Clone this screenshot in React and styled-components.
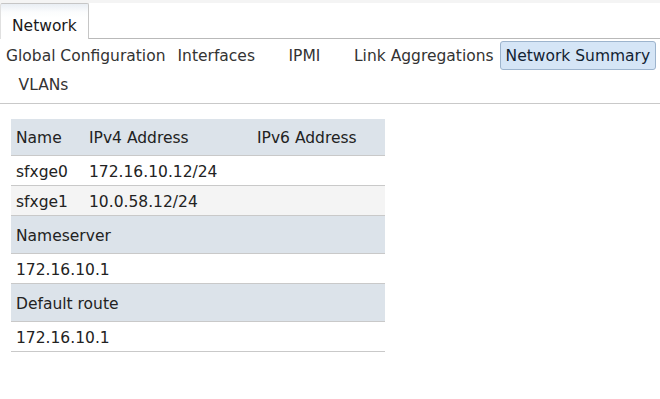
import React from "react";
import styled, { createGlobalStyle } from "styled-components";

const Global = createGlobalStyle`
  html, body { margin: 0; padding: 0; background: #fff; }
  body { font-family: "DejaVu Sans", Verdana, sans-serif; font-size: 15.5px; color: #222; }
`;

const Page = styled.div`
  width: 660px;
  height: 399px;
  background: #fff;
  border-top: 3px solid #f4f4f4;
  box-sizing: border-box;
`;

const TabBar = styled.div`
  display: flex;
  align-items: flex-end;
  height: 36px;
`;

const Tab = styled.div`
  width: 89px;
  height: 36px;
  box-sizing: border-box;
  border: 1px solid #c6c6c6;
  border-bottom: none;
  border-left-color: #e0e0e0;
  border-radius: 2px 2px 0 0;
  background: linear-gradient(#e9eef4 0px, #fbfcfd 8px, #fff 14px);
  padding: 0 0 4px 11px;
  display: flex;
  align-items: flex-end;
  color: #1a1a1a;
`;

const TabFill = styled.div`
  flex: 1;
  align-self: stretch;
  border-bottom: 1px solid #b9b9b9;
`;

const SubNav = styled.div`
  display: flex;
  flex-wrap: wrap;
  padding: 2px 0 4px 0;
  border-bottom: 1px solid #c9c9c9;
`;

const NavItem = styled.div`
  min-width: 87px;
  height: 29px;
  box-sizing: border-box;
  padding: 1px 5px 0;
  display: flex;
  align-items: center;
  justify-content: center;
  white-space: nowrap;
  border: 1px solid ${(p) => (p.$active ? "#9db4cd" : "transparent")};
  border-radius: 3px;
  background: ${(p) => (p.$active ? "#d5e5f6" : "transparent")};
  color: ${(p) => (p.$active ? "#112233" : "#333")};
`;

const Content = styled.div`
  padding: 15px 11px;
`;

const Table = styled.div`
  width: 374px;
  display: grid;
  grid-template-columns: 73px 168px 133px;
`;

const Cell = styled.div`
  height: ${(p) => (p.$section ? 38 : p.$head ? 37 : 30)}px;
  box-sizing: border-box;
  padding: 2px 5px 0;
  display: flex;
  align-items: center;
  background: ${(p) => (p.$head || p.$section ? "#dce3ea" : p.$alt ? "#f4f4f4" : "#fff")};
  border-bottom: 1px solid #c9c9c9;
  grid-column: ${(p) => (p.$span ? "1 / -1" : "auto")};
  white-space: nowrap;
  color: #222;
`;

const rows = [
  ["sfxge0", "172.16.10.12/24", ""],
  ["sfxge1", "10.0.58.12/24", ""],
];

export default function App() {
  return (
    <Page>
      <Global />
      <TabBar>
        <Tab>Network</Tab>
        <TabFill />
      </TabBar>
      <SubNav>
        <NavItem>Global Configuration</NavItem>
        <NavItem>Interfaces</NavItem>
        <NavItem>IPMI</NavItem>
        <NavItem>Link Aggregations</NavItem>
        <NavItem $active>Network Summary</NavItem>
        <NavItem>VLANs</NavItem>
      </SubNav>
      <Content>
        <Table>
          <Cell $head>Name</Cell>
          <Cell $head>IPv4 Address</Cell>
          <Cell $head>IPv6 Address</Cell>
          {rows.map((r, i) =>
            r.map((c, j) => (
              <Cell key={`${i}-${j}`} $alt={i % 2 === 1}>
                {c}
              </Cell>
            ))
          )}
          <Cell $section $span>Nameserver</Cell>
          <Cell $span>172.16.10.1</Cell>
          <Cell $section $span>Default route</Cell>
          <Cell $span>172.16.10.1</Cell>
        </Table>
      </Content>
    </Page>
  );
}
